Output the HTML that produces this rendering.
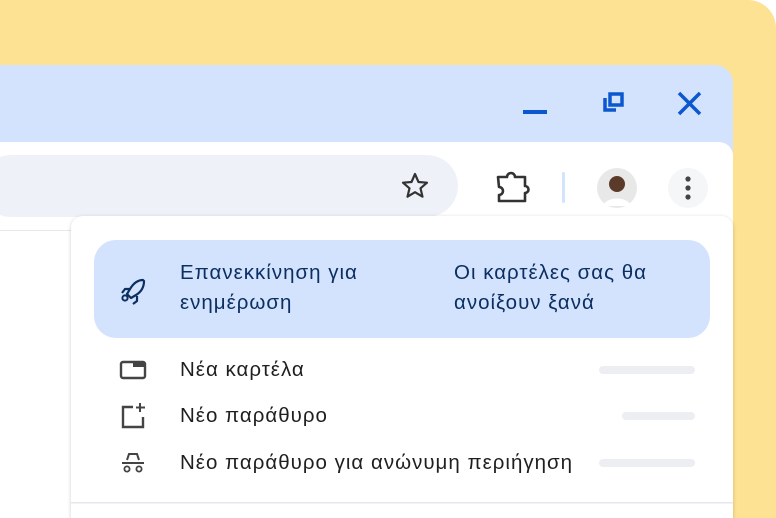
<!DOCTYPE html>
<html style="margin:0;width:776px;height:518px;overflow:hidden"><head><style>
body{margin:0;width:776px;height:518px;overflow:hidden;background:#fff;font-family:"Liberation Sans","DejaVu Sans",sans-serif;position:relative}
.bg{position:absolute;left:0;top:0;width:776px;height:518px;background:#fde293;border-radius:0 28px 0 0;}
.win{position:absolute;left:0;top:65px;width:733px;height:453px;background:#d3e3fd;border-radius:0 18px 0 0;}
.tool{position:absolute;left:0;top:142px;width:733px;height:376px;background:#fff;border-radius:0 14px 0 0;}
.omni{position:absolute;left:-20px;top:155px;width:478px;height:62px;background:#eef2f8;border-radius:31px;}
.content{position:absolute;left:0;top:230px;width:733px;height:288px;border-top:1px solid #e6e8ec;background:#fff}
.menu{position:absolute;left:71px;top:216px;width:662px;height:310px;background:#fff;border-radius:12px 12px 0 0;box-shadow:0 1px 4px rgba(0,0,0,.18);}
.hl{position:absolute;left:94px;top:240px;width:616px;height:98px;background:#d3e3fd;border-radius:22px;}
.t{position:absolute;font-size:20.5px;letter-spacing:1px;color:#1f1f1f;line-height:30px;white-space:nowrap}
.h{color:#0b2f62}
.bar{position:absolute;height:8px;border-radius:4px;background:#eceef1;}
</style></head><body>
<div class="bg"></div>
<div class="win"></div>
<svg style="position:absolute;left:0;top:0" width="776" height="518">
<rect x="523" y="110" width="24" height="4" fill="#0b57d0"/>
<path d="M605 98v12h11M610 94h12v11h-12z" fill="none" stroke="#0b57d0" stroke-width="3.5"/>
<path d="M679 93l21 21M700 93l-21 21" stroke="#0b57d0" stroke-width="3.5"/>
</svg>
<div class="tool"></div>
<div class="omni"></div>
<div class="content"></div>
<svg style="position:absolute;left:0;top:0" width="776" height="518">
<path d="M415 174l3.5 8 8.5.7-6.5 5.6 2 8.4-7.5-4.5-7.5 4.5 2-8.4-6.5-5.6 8.5-.7z" fill="none" stroke="#333" stroke-width="2.2" stroke-linejoin="round"/>
<path d="M498 177h9a4 4 0 0 1 8 0h10v9a3.5 3.5 0 0 1 0 7v8h-26v-6a4 4 0 0 0 0-8z" fill="none" stroke="#333" stroke-width="2.6" stroke-linejoin="round"/>
<rect x="562" y="172" width="3" height="31" rx="1.5" fill="#d3e3fd"/>
<circle cx="617" cy="188" r="20" fill="#e8e8e8"/>
<circle cx="617" cy="184" r="8" fill="#5b3a2a"/>
<path d="M603 206c3-10 25-10 28 0" fill="#fff"/>
<circle cx="688" cy="188" r="20" fill="#f5f6f8"/>
<circle cx="688" cy="179" r="2.6" fill="#444"/><circle cx="688" cy="188" r="2.6" fill="#444"/><circle cx="688" cy="197" r="2.6" fill="#444"/>
</svg>
<div class="menu"></div>
<div class="hl"></div>
<svg style="position:absolute;left:0;top:0" width="776" height="518">
<path d="M143 280c-6 0-10 4-13 9l-3 5 4 4 5-3c5-3 8-8 8-14z" fill="none" stroke="#0b2f62" stroke-width="2.2" stroke-linejoin="round"/>
<circle cx="125" cy="298" r="2.6" fill="none" stroke="#0b2f62" stroke-width="2"/>
<path d="M130 289h-5l-3 4M137 296v5l-4 3" fill="none" stroke="#0b2f62" stroke-width="2.2" stroke-linejoin="round"/>
<rect x="121" y="362" width="24" height="16" rx="2" fill="none" stroke="#444" stroke-width="2.4"/>
<rect x="133" y="362" width="12" height="5" fill="#444"/>
<path d="M133 407h-10v20h20v-10" fill="none" stroke="#444" stroke-width="2.4"/>
<path d="M140 403v9M136 407.5h9" stroke="#444" stroke-width="2"/>
<path d="M127 460l2-6h8l2 6M122 463h22" fill="none" stroke="#444" stroke-width="2"/>
<circle cx="127" cy="469" r="2.6" fill="none" stroke="#444" stroke-width="1.8"/><circle cx="139" cy="469" r="2.6" fill="none" stroke="#444" stroke-width="1.8"/>
<rect x="71" y="502" width="662" height="1.5" fill="#e3e7ee"/>
</svg>
<div class="t h" style="left:180px;top:258px">Επανεκκίνηση για<br>ενημέρωση</div>
<div class="t h" style="left:454px;top:258px">Οι καρτέλες σας θα<br>ανοίξουν ξανά</div>
<div class="t" style="left:180px;top:355px">Νέα καρτέλα</div>
<div class="t" style="left:180px;top:401px">Νέο παράθυρο</div>
<div class="t" style="left:180px;top:448px">Νέο παράθυρο για ανώνυμη περιήγηση</div>
<div class="bar" style="left:599px;top:366px;width:96px"></div>
<div class="bar" style="left:622px;top:412px;width:73px"></div>
<div class="bar" style="left:599px;top:459px;width:96px"></div>
</body></html>
